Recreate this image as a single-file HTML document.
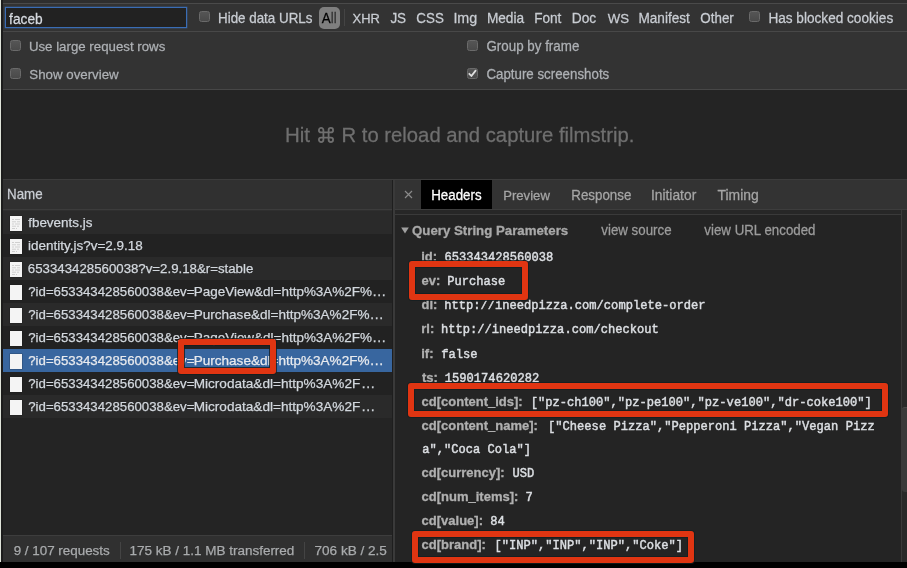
<!DOCTYPE html>
<html><head><meta charset="utf-8"><style>
html,body{margin:0;padding:0;width:907px;height:568px;overflow:hidden;background:#242424}
.t{position:absolute;white-space:nowrap;line-height:20px}
#tx{position:absolute;left:0;top:0;width:907px;height:568px;will-change:transform}
</style></head><body>
<div style="position:absolute;left:0px;top:0px;width:907px;height:3px;background:#2e2e2e"></div><div style="position:absolute;left:0px;top:3px;width:907px;height:1px;background:#4a4a4a"></div><div style="position:absolute;left:0px;top:4px;width:907px;height:27px;background:#333333"></div><div style="position:absolute;left:0px;top:31px;width:907px;height:1px;background:#484848"></div><div style="position:absolute;left:0px;top:32px;width:907px;height:57px;background:#333333"></div><div style="position:absolute;left:0px;top:89px;width:907px;height:1px;background:#474747"></div><div style="position:absolute;left:0px;top:90px;width:907px;height:89px;background:#242424"></div><div style="position:absolute;left:0px;top:179px;width:907px;height:1px;background:#3c3c3c"></div><div style="position:absolute;left:0px;top:180px;width:392px;height:29px;background:#303030"></div><div style="position:absolute;left:0px;top:209px;width:392px;height:1px;background:#3c3c3c"></div><div style="position:absolute;left:0px;top:210px;width:392px;height:1px;background:#2f2f2f"></div><div style="position:absolute;left:0px;top:211px;width:392px;height:324px;background:#242424"></div><div style="position:absolute;left:0px;top:211px;width:392px;height:23px;background:#2a2a2a"></div><div style="position:absolute;left:0px;top:234px;width:392px;height:23px;background:#222222"></div><div style="position:absolute;left:0px;top:257px;width:392px;height:23px;background:#2a2a2a"></div><div style="position:absolute;left:0px;top:280px;width:392px;height:23px;background:#222222"></div><div style="position:absolute;left:0px;top:303px;width:392px;height:23px;background:#2a2a2a"></div><div style="position:absolute;left:0px;top:326px;width:392px;height:23px;background:#222222"></div><div style="position:absolute;left:0px;top:349px;width:392px;height:23px;background:#38669f"></div><div style="position:absolute;left:0px;top:372px;width:392px;height:23px;background:#222222"></div><div style="position:absolute;left:0px;top:395px;width:392px;height:23px;background:#2a2a2a"></div><div style="position:absolute;left:0px;top:535px;width:392px;height:1px;background:#3d3d3d"></div><div style="position:absolute;left:0px;top:536px;width:392px;height:26px;background:#303030"></div><div style="position:absolute;left:120px;top:542px;width:1px;height:17px;background:#444"></div><div style="position:absolute;left:304px;top:542px;width:1px;height:17px;background:#444"></div><div style="position:absolute;left:392px;top:180px;width:1px;height:382px;background:#1e1e1e"></div><div style="position:absolute;left:393px;top:180px;width:2px;height:382px;background:#3a3a3a"></div><div style="position:absolute;left:395px;top:180px;width:512px;height:29px;background:#333333"></div><div style="position:absolute;left:421px;top:180px;width:71px;height:29px;background:#000000"></div><div style="position:absolute;left:395px;top:209px;width:512px;height:1px;background:#3d3d3d"></div><div style="position:absolute;left:395px;top:210px;width:512px;height:4px;background:#272727"></div><div style="position:absolute;left:395px;top:214px;width:512px;height:1px;background:#3a3a3a"></div><div style="position:absolute;left:395px;top:215px;width:512px;height:347px;background:#242424"></div><div style="position:absolute;left:901px;top:210px;width:1px;height:352px;background:#3a3a3a"></div><div style="position:absolute;left:902px;top:210px;width:5px;height:352px;background:#292929"></div><div style="position:absolute;left:902px;top:407px;width:5px;height:84px;background:#3a3a3a;border-top:1px solid #4a4a4a;border-radius:3px 0 0 3px"></div><div style="position:absolute;left:0px;top:562px;width:907px;height:6px;background:#000"></div><div style="position:absolute;left:0px;top:0px;width:1px;height:562px;background:#e0e4da"></div><div style="position:absolute;left:1px;top:0px;width:2px;height:562px;background:#1c1c1c"></div><div style="position:absolute;left:5px;top:7px;width:182px;height:21px;box-sizing:border-box;border:1px solid #3a6db5;background:#222;box-shadow:0 0 0 0.4px rgba(58,109,181,0.6)"></div><div style="position:absolute;left:199px;top:11px;width:11px;height:11px;box-sizing:border-box;border:1px solid #6a6a6a;border-radius:2.5px;background:linear-gradient(#555,#4a4a4a)"></div><div style="position:absolute;left:749px;top:11px;width:11px;height:11px;box-sizing:border-box;border:1px solid #6a6a6a;border-radius:2.5px;background:linear-gradient(#555,#4a4a4a)"></div><div style="position:absolute;left:10px;top:40px;width:11px;height:11px;box-sizing:border-box;border:1px solid #6a6a6a;border-radius:2.5px;background:linear-gradient(#555,#4a4a4a)"></div><div style="position:absolute;left:10px;top:68px;width:11px;height:11px;box-sizing:border-box;border:1px solid #6a6a6a;border-radius:2.5px;background:linear-gradient(#555,#4a4a4a)"></div><div style="position:absolute;left:467px;top:40px;width:11px;height:11px;box-sizing:border-box;border:1px solid #6a6a6a;border-radius:2.5px;background:linear-gradient(#555,#4a4a4a)"></div><div style="position:absolute;left:467px;top:68px;width:11px;height:11px;box-sizing:border-box;border:1px solid #6a6a6a;border-radius:2.5px;background:linear-gradient(#555,#4a4a4a)"></div><svg style="position:absolute;left:467px;top:68px" width="11" height="11" viewBox="0 0 11 11"><path d="M2.3 5.8 L4.4 8 L8.6 2.6" fill="none" stroke="#e0e0e0" stroke-width="1.8" stroke-linecap="round" stroke-linejoin="round"/></svg><div style="position:absolute;left:319px;top:7px;width:21px;height:22px;background:#7f7f7f;border-radius:5px"></div><div style="position:absolute;left:344px;top:9px;width:1px;height:17px;background:#444"></div><svg style="position:absolute;left:9px;top:215px" width="14" height="17" viewBox="0 0 14 17"><rect x="0.5" y="0.5" width="13" height="16" fill="#111" opacity="0.35"/><rect x="1" y="1" width="12" height="15" fill="#f4f4f4"/><rect x="3" y="4" width="2" height="1" fill="#cfcfcf"/><rect x="6" y="4" width="5" height="1" fill="#cfcfcf"/><rect x="3" y="6.3" width="4" height="1" fill="#cfcfcf"/><rect x="8" y="6.3" width="3" height="1" fill="#cfcfcf"/><rect x="3" y="8.5" width="2" height="1" fill="#cfcfcf"/><rect x="6" y="8.5" width="5" height="1" fill="#cfcfcf"/><rect x="3" y="10.7" width="4" height="1" fill="#cfcfcf"/><rect x="8" y="10.7" width="2" height="1" fill="#cfcfcf"/><rect x="3" y="13" width="3" height="1" fill="#cfcfcf"/><rect x="7" y="13" width="1" height="1" fill="#cfcfcf"/></svg><svg style="position:absolute;left:9px;top:238px" width="14" height="17" viewBox="0 0 14 17"><rect x="0.5" y="0.5" width="13" height="16" fill="#111" opacity="0.35"/><rect x="1" y="1" width="12" height="15" fill="#f4f4f4"/><rect x="3" y="4" width="2" height="1" fill="#cfcfcf"/><rect x="6" y="4" width="5" height="1" fill="#cfcfcf"/><rect x="3" y="6.3" width="4" height="1" fill="#cfcfcf"/><rect x="8" y="6.3" width="3" height="1" fill="#cfcfcf"/><rect x="3" y="8.5" width="2" height="1" fill="#cfcfcf"/><rect x="6" y="8.5" width="5" height="1" fill="#cfcfcf"/><rect x="3" y="10.7" width="4" height="1" fill="#cfcfcf"/><rect x="8" y="10.7" width="2" height="1" fill="#cfcfcf"/><rect x="3" y="13" width="3" height="1" fill="#cfcfcf"/><rect x="7" y="13" width="1" height="1" fill="#cfcfcf"/></svg><svg style="position:absolute;left:9px;top:261px" width="14" height="17" viewBox="0 0 14 17"><rect x="0.5" y="0.5" width="13" height="16" fill="#111" opacity="0.35"/><rect x="1" y="1" width="12" height="15" fill="#f4f4f4"/><rect x="3" y="4" width="2" height="1" fill="#cfcfcf"/><rect x="6" y="4" width="5" height="1" fill="#cfcfcf"/><rect x="3" y="6.3" width="4" height="1" fill="#cfcfcf"/><rect x="8" y="6.3" width="3" height="1" fill="#cfcfcf"/><rect x="3" y="8.5" width="2" height="1" fill="#cfcfcf"/><rect x="6" y="8.5" width="5" height="1" fill="#cfcfcf"/><rect x="3" y="10.7" width="4" height="1" fill="#cfcfcf"/><rect x="8" y="10.7" width="2" height="1" fill="#cfcfcf"/><rect x="3" y="13" width="3" height="1" fill="#cfcfcf"/><rect x="7" y="13" width="1" height="1" fill="#cfcfcf"/></svg><svg style="position:absolute;left:9px;top:284px" width="14" height="17" viewBox="0 0 14 17"><rect x="0.5" y="0.5" width="13" height="16" fill="#111" opacity="0.35"/><rect x="1" y="1" width="12" height="15" fill="#f4f4f4"/></svg><svg style="position:absolute;left:9px;top:307px" width="14" height="17" viewBox="0 0 14 17"><rect x="0.5" y="0.5" width="13" height="16" fill="#111" opacity="0.35"/><rect x="1" y="1" width="12" height="15" fill="#f4f4f4"/></svg><svg style="position:absolute;left:9px;top:330px" width="14" height="17" viewBox="0 0 14 17"><rect x="0.5" y="0.5" width="13" height="16" fill="#111" opacity="0.35"/><rect x="1" y="1" width="12" height="15" fill="#f4f4f4"/></svg><svg style="position:absolute;left:9px;top:353px" width="14" height="17" viewBox="0 0 14 17"><rect x="0.5" y="0.5" width="13" height="16" fill="#111" opacity="0.35"/><rect x="1" y="1" width="12" height="15" fill="#f4f4f4"/></svg><svg style="position:absolute;left:9px;top:376px" width="14" height="17" viewBox="0 0 14 17"><rect x="0.5" y="0.5" width="13" height="16" fill="#111" opacity="0.35"/><rect x="1" y="1" width="12" height="15" fill="#f4f4f4"/></svg><svg style="position:absolute;left:9px;top:399px" width="14" height="17" viewBox="0 0 14 17"><rect x="0.5" y="0.5" width="13" height="16" fill="#111" opacity="0.35"/><rect x="1" y="1" width="12" height="15" fill="#f4f4f4"/></svg><svg style="position:absolute;left:404px;top:190px" width="9" height="9" viewBox="0 0 9 9"><path d="M1 1L8 8M8 1L1 8" stroke="#8a8a8a" stroke-width="1.2"/></svg><svg style="position:absolute;left:401px;top:227px" width="8" height="7" viewBox="0 0 8 7"><path d="M0.2 0.5H7.8L4 6.5Z" fill="#a0a0a0"/></svg>
<div id="tx"><div class="t" style="left:9.11px;top:10px;font-size:13.73px;color:#d6dae0;font-weight:normal;font-family:'Liberation Sans', sans-serif;transform:scaleY(1.03);transform-origin:0 14px;-webkit-text-stroke:0.25px #d6dae0;">faceb</div><div class="t" style="left:218.00px;top:9px;font-size:13.38px;color:#c9cdd3;font-weight:normal;font-family:'Liberation Sans', sans-serif;transform:scaleY(1.03);transform-origin:0 14px;-webkit-text-stroke:0.25px #c9cdd3;">Hide data URLs</div><div class="t" style="left:321.77px;top:9px;font-size:13.4px;color:#000;font-weight:normal;font-family:'Liberation Sans', sans-serif;transform:scaleY(1.03);transform-origin:0 14px;-webkit-text-stroke:0.25px #000;">A</div><div class="t" style="left:330.80px;top:9px;font-size:13.4px;color:#333;font-weight:normal;font-family:'Liberation Sans', sans-serif;transform:scaleY(1.03);transform-origin:0 14px;-webkit-text-stroke:0.25px #333;">ll</div><div class="t" style="left:352.61px;top:9px;font-size:12.93px;color:#c9cdd3;font-weight:normal;font-family:'Liberation Sans', sans-serif;transform:scaleY(1.03);transform-origin:0 14px;-webkit-text-stroke:0.25px #c9cdd3;">XHR</div><div class="t" style="left:390.39px;top:9px;font-size:13.49px;color:#c9cdd3;font-weight:normal;font-family:'Liberation Sans', sans-serif;transform:scaleY(1.03);transform-origin:0 14px;-webkit-text-stroke:0.25px #c9cdd3;">JS</div><div class="t" style="left:416.32px;top:9px;font-size:13.38px;color:#c9cdd3;font-weight:normal;font-family:'Liberation Sans', sans-serif;transform:scaleY(1.03);transform-origin:0 14px;-webkit-text-stroke:0.25px #c9cdd3;">CSS</div><div class="t" style="left:453.38px;top:8px;font-size:14.34px;color:#c9cdd3;font-weight:normal;font-family:'Liberation Sans', sans-serif;transform:scaleY(1.03);transform-origin:0 15px;-webkit-text-stroke:0.25px #c9cdd3;">Img</div><div class="t" style="left:486.88px;top:9px;font-size:13.68px;color:#c9cdd3;font-weight:normal;font-family:'Liberation Sans', sans-serif;transform:scaleY(1.03);transform-origin:0 14px;-webkit-text-stroke:0.25px #c9cdd3;">Media</div><div class="t" style="left:534.18px;top:9px;font-size:13.61px;color:#c9cdd3;font-weight:normal;font-family:'Liberation Sans', sans-serif;transform:scaleY(1.03);transform-origin:0 14px;-webkit-text-stroke:0.25px #c9cdd3;">Font</div><div class="t" style="left:571.77px;top:9px;font-size:13.78px;color:#c9cdd3;font-weight:normal;font-family:'Liberation Sans', sans-serif;transform:scaleY(1.03);transform-origin:0 14px;-webkit-text-stroke:0.25px #c9cdd3;">Doc</div><div class="t" style="left:607.74px;top:9px;font-size:13.21px;color:#c9cdd3;font-weight:normal;font-family:'Liberation Sans', sans-serif;transform:scaleY(1.03);transform-origin:0 14px;-webkit-text-stroke:0.25px #c9cdd3;">WS</div><div class="t" style="left:638.48px;top:9px;font-size:13.61px;color:#c9cdd3;font-weight:normal;font-family:'Liberation Sans', sans-serif;transform:scaleY(1.03);transform-origin:0 14px;-webkit-text-stroke:0.25px #c9cdd3;">Manifest</div><div class="t" style="left:700.37px;top:9px;font-size:13.39px;color:#c9cdd3;font-weight:normal;font-family:'Liberation Sans', sans-serif;transform:scaleY(1.03);transform-origin:0 14px;-webkit-text-stroke:0.25px #c9cdd3;">Other</div><div class="t" style="left:768.38px;top:9px;font-size:13.62px;color:#c9cdd3;font-weight:normal;font-family:'Liberation Sans', sans-serif;transform:scaleY(1.03);transform-origin:0 14px;-webkit-text-stroke:0.25px #c9cdd3;">Has blocked cookies</div><div class="t" style="left:28.88px;top:37px;font-size:13.27px;color:#aeb1b5;font-weight:normal;font-family:'Liberation Sans', sans-serif;transform:scaleY(1.03);transform-origin:0 14px;-webkit-text-stroke:0.25px #aeb1b5;">Use large request rows</div><div class="t" style="left:29.30px;top:65px;font-size:13.3px;color:#aeb1b5;font-weight:normal;font-family:'Liberation Sans', sans-serif;transform:scaleY(1.03);transform-origin:0 14px;-webkit-text-stroke:0.25px #aeb1b5;">Show overview</div><div class="t" style="left:486.43px;top:37px;font-size:13.39px;color:#aeb1b5;font-weight:normal;font-family:'Liberation Sans', sans-serif;transform:scaleY(1.03);transform-origin:0 14px;-webkit-text-stroke:0.25px #aeb1b5;">Group by frame</div><div class="t" style="left:486.42px;top:65px;font-size:13.32px;color:#aeb1b5;font-weight:normal;font-family:'Liberation Sans', sans-serif;transform:scaleY(1.03);transform-origin:0 14px;-webkit-text-stroke:0.25px #aeb1b5;">Capture screenshots</div><div class="t" style="left:284.92px;top:125px;font-size:20.49px;color:#6f6f6f;font-weight:normal;font-family:'Liberation Sans', sans-serif;transform:scaleY(1.03);transform-origin:0 17px;-webkit-text-stroke:0.25px #6f6f6f;">Hit</div><div class="t" style="left:341.54px;top:125px;font-size:20.27px;color:#6f6f6f;font-weight:normal;font-family:'Liberation Sans', sans-serif;transform:scaleY(1.03);transform-origin:0 17px;-webkit-text-stroke:0.25px #6f6f6f;">R to reload and capture filmstrip.</div><div class="t" style="left:7.00px;top:185px;font-size:13.35px;color:#c9cdd3;font-weight:normal;font-family:'Liberation Sans', sans-serif;transform:scaleY(1.03);transform-origin:0 14px;-webkit-text-stroke:0.25px #c9cdd3;">Name</div><div class="t" style="left:28.21px;top:213px;font-size:13.43px;color:#d3d8de;font-weight:normal;font-family:'Liberation Sans', sans-serif;transform:scaleY(1.0);transform-origin:0 14px;-webkit-text-stroke:0.25px #d3d8de;">fbevents.js</div><div class="t" style="left:28.10px;top:236px;font-size:13.46px;color:#d3d8de;font-weight:normal;font-family:'Liberation Sans', sans-serif;transform:scaleY(1.0);transform-origin:0 14px;-webkit-text-stroke:0.25px #d3d8de;">identity.js?v=2.9.18</div><div class="t" style="left:27.83px;top:259px;font-size:13.26px;color:#d3d8de;font-weight:normal;font-family:'Liberation Sans', sans-serif;transform:scaleY(1.0);transform-origin:0 14px;-webkit-text-stroke:0.25px #d3d8de;">653343428560038?v=2.9.18&amp;r=stable</div><div class="t" style="left:28.26px;top:282px;font-size:13.22px;color:#d3d8de;font-weight:normal;font-family:'Liberation Sans', sans-serif;transform:scaleY(1.0);transform-origin:0 14px;-webkit-text-stroke:0.25px #d3d8de;">?id=653343428560038&amp;ev=</div><div class="t" style="left:193.69px;top:282px;font-size:13.48px;color:#d3d8de;font-weight:normal;font-family:'Liberation Sans', sans-serif;transform:scaleY(1.0);transform-origin:0 14px;-webkit-text-stroke:0.25px #d3d8de;">PageView&amp;dl=http%3A%2F%</div><div class="t" style="left:372.05px;top:281px;font-size:14.34px;color:#d3d8de;font-weight:normal;font-family:'Liberation Sans', sans-serif;transform:scaleY(1.0);transform-origin:0 15px;-webkit-text-stroke:0.25px #d3d8de;">…</div><div class="t" style="left:28.26px;top:305px;font-size:13.22px;color:#d3d8de;font-weight:normal;font-family:'Liberation Sans', sans-serif;transform:scaleY(1.0);transform-origin:0 14px;-webkit-text-stroke:0.25px #d3d8de;">?id=653343428560038&amp;ev=</div><div class="t" style="left:193.69px;top:305px;font-size:13.55px;color:#d3d8de;font-weight:normal;font-family:'Liberation Sans', sans-serif;transform:scaleY(1.0);transform-origin:0 14px;-webkit-text-stroke:0.25px #d3d8de;">Purchase&amp;dl=http%3A%2F%</div><div class="t" style="left:369.55px;top:304px;font-size:14.34px;color:#d3d8de;font-weight:normal;font-family:'Liberation Sans', sans-serif;transform:scaleY(1.0);transform-origin:0 15px;-webkit-text-stroke:0.25px #d3d8de;">…</div><div class="t" style="left:28.26px;top:328px;font-size:13.22px;color:#d3d8de;font-weight:normal;font-family:'Liberation Sans', sans-serif;transform:scaleY(1.0);transform-origin:0 14px;-webkit-text-stroke:0.25px #d3d8de;">?id=653343428560038&amp;ev=</div><div class="t" style="left:193.69px;top:328px;font-size:13.48px;color:#d3d8de;font-weight:normal;font-family:'Liberation Sans', sans-serif;transform:scaleY(1.0);transform-origin:0 14px;-webkit-text-stroke:0.25px #d3d8de;">PageView&amp;dl=http%3A%2F%</div><div class="t" style="left:372.05px;top:327px;font-size:14.34px;color:#d3d8de;font-weight:normal;font-family:'Liberation Sans', sans-serif;transform:scaleY(1.0);transform-origin:0 15px;-webkit-text-stroke:0.25px #d3d8de;">…</div><div class="t" style="left:28.26px;top:351px;font-size:13.22px;color:#e8eaee;font-weight:normal;font-family:'Liberation Sans', sans-serif;transform:scaleY(1.0);transform-origin:0 14px;-webkit-text-stroke:0.25px #e8eaee;">?id=653343428560038&amp;ev=</div><div class="t" style="left:193.69px;top:351px;font-size:13.55px;color:#e8eaee;font-weight:normal;font-family:'Liberation Sans', sans-serif;transform:scaleY(1.0);transform-origin:0 14px;-webkit-text-stroke:0.25px #e8eaee;">Purchase&amp;dl=http%3A%2F%</div><div class="t" style="left:369.55px;top:350px;font-size:14.34px;color:#e8eaee;font-weight:normal;font-family:'Liberation Sans', sans-serif;transform:scaleY(1.0);transform-origin:0 15px;-webkit-text-stroke:0.25px #e8eaee;">…</div><div class="t" style="left:28.26px;top:374px;font-size:13.22px;color:#d3d8de;font-weight:normal;font-family:'Liberation Sans', sans-serif;transform:scaleY(1.0);transform-origin:0 14px;-webkit-text-stroke:0.25px #d3d8de;">?id=653343428560038&amp;ev=</div><div class="t" style="left:193.68px;top:374px;font-size:13.6px;color:#d3d8de;font-weight:normal;font-family:'Liberation Sans', sans-serif;transform:scaleY(1.0);transform-origin:0 14px;-webkit-text-stroke:0.25px #d3d8de;">Microdata&amp;dl=http%3A%2F</div><div class="t" style="left:360.95px;top:373px;font-size:14.34px;color:#d3d8de;font-weight:normal;font-family:'Liberation Sans', sans-serif;transform:scaleY(1.0);transform-origin:0 15px;-webkit-text-stroke:0.25px #d3d8de;">…</div><div class="t" style="left:28.26px;top:397px;font-size:13.22px;color:#d3d8de;font-weight:normal;font-family:'Liberation Sans', sans-serif;transform:scaleY(1.0);transform-origin:0 14px;-webkit-text-stroke:0.25px #d3d8de;">?id=653343428560038&amp;ev=</div><div class="t" style="left:193.68px;top:397px;font-size:13.6px;color:#d3d8de;font-weight:normal;font-family:'Liberation Sans', sans-serif;transform:scaleY(1.0);transform-origin:0 14px;-webkit-text-stroke:0.25px #d3d8de;">Microdata&amp;dl=http%3A%2F</div><div class="t" style="left:360.95px;top:396px;font-size:14.34px;color:#d3d8de;font-weight:normal;font-family:'Liberation Sans', sans-serif;transform:scaleY(1.0);transform-origin:0 15px;-webkit-text-stroke:0.25px #d3d8de;">…</div><div class="t" style="left:13.67px;top:541px;font-size:13.4px;color:#a9abad;font-weight:normal;font-family:'Liberation Sans', sans-serif;transform:scaleY(1.0);transform-origin:0 14px;-webkit-text-stroke:0.25px #a9abad;">9 / 107 requests</div><div class="t" style="left:129.47px;top:541px;font-size:13.49px;color:#a9abad;font-weight:normal;font-family:'Liberation Sans', sans-serif;transform:scaleY(1.0);transform-origin:0 14px;-webkit-text-stroke:0.25px #a9abad;">175 kB / 1.1 MB transferred</div><div class="t" style="left:314.50px;top:541px;font-size:13.57px;color:#a9abad;font-weight:normal;font-family:'Liberation Sans', sans-serif;transform:scaleY(1.0);transform-origin:0 14px;-webkit-text-stroke:0.25px #a9abad;">706 kB / 2.5</div><div class="t" style="left:431.21px;top:186px;font-size:13.34px;color:#ffffff;font-weight:normal;font-family:'Liberation Sans', sans-serif;transform:scaleY(1.03);transform-origin:0 14px;-webkit-text-stroke:0.25px #ffffff;">Headers</div><div class="t" style="left:503.22px;top:186px;font-size:13.12px;color:#a6a6a6;font-weight:normal;font-family:'Liberation Sans', sans-serif;transform:scaleY(1.03);transform-origin:0 14px;-webkit-text-stroke:0.25px #a6a6a6;">Preview</div><div class="t" style="left:571.30px;top:186px;font-size:13.35px;color:#a6a6a6;font-weight:normal;font-family:'Liberation Sans', sans-serif;transform:scaleY(1.03);transform-origin:0 14px;-webkit-text-stroke:0.25px #a6a6a6;">Response</div><div class="t" style="left:650.92px;top:185px;font-size:13.83px;color:#a6a6a6;font-weight:normal;font-family:'Liberation Sans', sans-serif;transform:scaleY(1.03);transform-origin:0 15px;-webkit-text-stroke:0.25px #a6a6a6;">Initiator</div><div class="t" style="left:717.49px;top:185px;font-size:13.92px;color:#a6a6a6;font-weight:normal;font-family:'Liberation Sans', sans-serif;transform:scaleY(1.03);transform-origin:0 15px;-webkit-text-stroke:0.25px #a6a6a6;">Timing</div><div class="t" style="left:412.06px;top:221px;font-size:13.26px;color:#a8a8a8;font-weight:bold;font-family:'Liberation Sans', sans-serif;transform:scaleY(1.03);transform-origin:0 14px;-webkit-text-stroke:0.3px #a8a8a8;">Query String Parameters</div><div class="t" style="left:601.25px;top:221px;font-size:13.33px;color:#9c9c9c;font-weight:normal;font-family:'Liberation Sans', sans-serif;transform:scaleY(1.03);transform-origin:0 14px;-webkit-text-stroke:0.25px #9c9c9c;">view source</div><div class="t" style="left:704.35px;top:221px;font-size:13.31px;color:#9c9c9c;font-weight:normal;font-family:'Liberation Sans', sans-serif;transform:scaleY(1.03);transform-origin:0 14px;-webkit-text-stroke:0.25px #9c9c9c;">view URL encoded</div><div class="t" style="left:421.19px;top:247px;font-size:13.0px;color:#b0b0b0;font-weight:bold;font-family:'Liberation Sans', sans-serif;transform:scaleY(1.03);transform-origin:0 14px;-webkit-text-stroke:0.3px #b0b0b0;">id:</div><div class="t" style="left:444.51px;top:248px;font-size:12.1px;color:#dcdfe3;font-weight:normal;font-family:'Liberation Mono', monospace;-webkit-text-stroke:0.45px #dcdfe3;transform:scaleY(1.05);transform-origin:0 13px">653343428560038</div><div class="t" style="left:421.59px;top:271px;font-size:13.0px;color:#b0b0b0;font-weight:bold;font-family:'Liberation Sans', sans-serif;transform:scaleY(1.03);transform-origin:0 14px;-webkit-text-stroke:0.3px #b0b0b0;">ev:</div><div class="t" style="left:447.14px;top:272px;font-size:12.1px;color:#dcdfe3;font-weight:normal;font-family:'Liberation Mono', monospace;-webkit-text-stroke:0.45px #dcdfe3;transform:scaleY(1.05);transform-origin:0 13px">Purchase</div><div class="t" style="left:421.57px;top:295px;font-size:13.0px;color:#b0b0b0;font-weight:bold;font-family:'Liberation Sans', sans-serif;transform:scaleY(1.03);transform-origin:0 14px;-webkit-text-stroke:0.3px #b0b0b0;">dl:</div><div class="t" style="left:444.21px;top:296px;font-size:12.1px;color:#dcdfe3;font-weight:normal;font-family:'Liberation Mono', monospace;-webkit-text-stroke:0.45px #dcdfe3;transform:scaleY(1.05);transform-origin:0 13px">http://ineedpizza.com/complete-order</div><div class="t" style="left:421.24px;top:319px;font-size:13.0px;color:#b0b0b0;font-weight:bold;font-family:'Liberation Sans', sans-serif;transform:scaleY(1.03);transform-origin:0 14px;-webkit-text-stroke:0.3px #b0b0b0;">rl:</div><div class="t" style="left:441.01px;top:320px;font-size:12.1px;color:#dcdfe3;font-weight:normal;font-family:'Liberation Mono', monospace;-webkit-text-stroke:0.45px #dcdfe3;transform:scaleY(1.05);transform-origin:0 13px">http://ineedpizza.com/checkout</div><div class="t" style="left:421.19px;top:344px;font-size:13.0px;color:#b0b0b0;font-weight:bold;font-family:'Liberation Sans', sans-serif;transform:scaleY(1.03);transform-origin:0 14px;-webkit-text-stroke:0.3px #b0b0b0;">if:</div><div class="t" style="left:441.28px;top:345px;font-size:12.1px;color:#dcdfe3;font-weight:normal;font-family:'Liberation Mono', monospace;-webkit-text-stroke:0.45px #dcdfe3;transform:scaleY(1.05);transform-origin:0 13px">false</div><div class="t" style="left:421.94px;top:368px;font-size:13.0px;color:#b0b0b0;font-weight:bold;font-family:'Liberation Sans', sans-serif;transform:scaleY(1.03);transform-origin:0 14px;-webkit-text-stroke:0.3px #b0b0b0;">ts:</div><div class="t" style="left:444.83px;top:369px;font-size:12.1px;color:#dcdfe3;font-weight:normal;font-family:'Liberation Mono', monospace;-webkit-text-stroke:0.45px #dcdfe3;transform:scaleY(1.05);transform-origin:0 13px">1590174620282</div><div class="t" style="left:421.59px;top:392px;font-size:13.0px;color:#b0b0b0;font-weight:bold;font-family:'Liberation Sans', sans-serif;transform:scaleY(1.03);transform-origin:0 14px;-webkit-text-stroke:0.3px #b0b0b0;">cd[content_ids]:</div><div class="t" style="left:530.68px;top:393px;font-size:12.1px;color:#dcdfe3;font-weight:normal;font-family:'Liberation Mono', monospace;-webkit-text-stroke:0.45px #dcdfe3;transform:scaleY(1.05);transform-origin:0 13px">[&quot;pz-ch100&quot;,&quot;pz-pe100&quot;,&quot;pz-ve100&quot;,&quot;dr-coke100&quot;]</div><div class="t" style="left:421.59px;top:416px;font-size:13.0px;color:#b0b0b0;font-weight:bold;font-family:'Liberation Sans', sans-serif;transform:scaleY(1.03);transform-origin:0 14px;-webkit-text-stroke:0.3px #b0b0b0;">cd[content_name]:</div><div class="t" style="left:548.08px;top:417px;font-size:12.1px;color:#dcdfe3;font-weight:normal;font-family:'Liberation Mono', monospace;-webkit-text-stroke:0.45px #dcdfe3;transform:scaleY(1.05);transform-origin:0 13px">[&quot;Cheese Pizza&quot;,&quot;Pepperoni Pizza&quot;,&quot;Vegan Pizz</div><div class="t" style="left:422.14px;top:440px;font-size:12.1px;color:#dcdfe3;font-weight:normal;font-family:'Liberation Mono', monospace;-webkit-text-stroke:0.45px #dcdfe3;transform:scaleY(1.05);transform-origin:0 13px">a&quot;,&quot;Coca Cola&quot;]</div><div class="t" style="left:421.59px;top:463px;font-size:13.0px;color:#b0b0b0;font-weight:bold;font-family:'Liberation Sans', sans-serif;transform:scaleY(1.03);transform-origin:0 14px;-webkit-text-stroke:0.3px #b0b0b0;">cd[currency]:</div><div class="t" style="left:512.46px;top:464px;font-size:12.1px;color:#dcdfe3;font-weight:normal;font-family:'Liberation Mono', monospace;-webkit-text-stroke:0.45px #dcdfe3;transform:scaleY(1.05);transform-origin:0 13px">USD</div><div class="t" style="left:421.59px;top:487px;font-size:13.0px;color:#b0b0b0;font-weight:bold;font-family:'Liberation Sans', sans-serif;transform:scaleY(1.03);transform-origin:0 14px;-webkit-text-stroke:0.3px #b0b0b0;">cd[num_items]:</div><div class="t" style="left:525.57px;top:488px;font-size:12.1px;color:#dcdfe3;font-weight:normal;font-family:'Liberation Mono', monospace;-webkit-text-stroke:0.45px #dcdfe3;transform:scaleY(1.05);transform-origin:0 13px">7</div><div class="t" style="left:421.59px;top:511px;font-size:13.0px;color:#b0b0b0;font-weight:bold;font-family:'Liberation Sans', sans-serif;transform:scaleY(1.03);transform-origin:0 14px;-webkit-text-stroke:0.3px #b0b0b0;">cd[value]:</div><div class="t" style="left:490.31px;top:512px;font-size:12.1px;color:#dcdfe3;font-weight:normal;font-family:'Liberation Mono', monospace;-webkit-text-stroke:0.45px #dcdfe3;transform:scaleY(1.05);transform-origin:0 13px">84</div><div class="t" style="left:421.59px;top:535px;font-size:13.0px;color:#b0b0b0;font-weight:bold;font-family:'Liberation Sans', sans-serif;transform:scaleY(1.03);transform-origin:0 14px;-webkit-text-stroke:0.3px #b0b0b0;">cd[brand]:</div><div class="t" style="left:494.38px;top:536px;font-size:12.1px;color:#dcdfe3;font-weight:normal;font-family:'Liberation Mono', monospace;-webkit-text-stroke:0.45px #dcdfe3;transform:scaleY(1.05);transform-origin:0 13px">[&quot;INP&quot;,&quot;INP&quot;,&quot;INP&quot;,&quot;Coke&quot;]</div><svg style="position:absolute;left:318px;top:127px" width="16" height="16" viewBox="0 0 16 16"><path d="M5.40 5.40H10.60V10.60H5.40Z M5.40 5.40V3.15A2.25 2.25 0 1 0 3.15 5.40H5.40 M10.60 5.40V3.15A2.25 2.25 0 1 1 12.85 5.40H10.60 M5.40 10.60V12.85A2.25 2.25 0 1 1 3.15 10.60H5.40 M10.60 10.60V12.85A2.25 2.25 0 1 0 12.85 10.60H10.60" fill="none" stroke="#6f6f6f" stroke-width="1.8"/></svg></div>
<div style="position:absolute;left:178px;top:339px;width:98px;height:35px;box-sizing:border-box;border:6.2px solid #e03512;border-radius:3px;box-shadow:0 0 0 1px rgba(20,30,32,0.8), inset 0 0 0 1px rgba(20,30,32,0.8)"></div><div style="position:absolute;left:409px;top:261px;width:119px;height:39px;box-sizing:border-box;border:6.2px solid #e03512;border-radius:3px;box-shadow:0 0 0 1px rgba(20,30,32,0.8), inset 0 0 0 1px rgba(20,30,32,0.8)"></div><div style="position:absolute;left:408px;top:383px;width:480px;height:34px;box-sizing:border-box;border:6.2px solid #e03512;border-radius:3px;box-shadow:0 0 0 1px rgba(20,30,32,0.8), inset 0 0 0 1px rgba(20,30,32,0.8)"></div><div style="position:absolute;left:412px;top:531px;width:282px;height:32px;box-sizing:border-box;border:6.2px solid #e03512;border-radius:3px;box-shadow:0 0 0 1px rgba(20,30,32,0.8), inset 0 0 0 1px rgba(20,30,32,0.8)"></div>
</body></html>
